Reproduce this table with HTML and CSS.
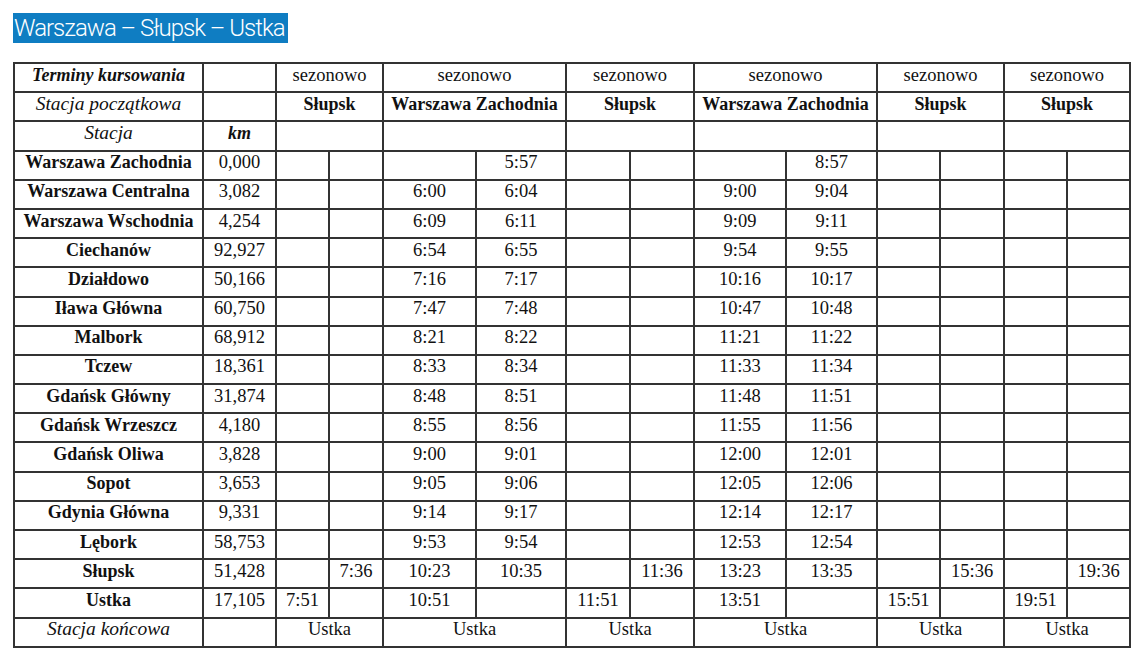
FILE: index.html
```html
<!DOCTYPE html>
<html lang="pl">
<head>
<meta charset="utf-8">
<title>Warszawa – Słupsk – Ustka</title>
<link rel="stylesheet" href="styles.css">
</head>
<body>
<div class="page">
  <h2 class="title"><span class="title-mark">Warszawa – Słupsk – Ustka</span></h2>
  <table class="timetable">
    <colgroup>
      <col class="c-st"><col class="c-km">
      <col class="c-a1"><col class="c-a2">
      <col class="c-b1"><col class="c-b2">
      <col class="c-c1"><col class="c-c2">
      <col class="c-d1"><col class="c-d2">
      <col class="c-e1"><col class="c-e2">
      <col class="c-f1"><col class="c-f2">
    </colgroup>
    <tbody>
      <tr>
        <td class="lbl bi">Terminy kursowania</td><td></td>
        <td colspan="2">sezonowo</td><td colspan="2">sezonowo</td><td colspan="2">sezonowo</td>
        <td colspan="2">sezonowo</td><td colspan="2">sezonowo</td><td colspan="2">sezonowo</td>
      </tr>
      <tr>
        <td class="lbl it">Stacja początkowa</td><td></td>
        <td colspan="2" class="b">Słupsk</td><td colspan="2" class="b">Warszawa Zachodnia</td><td colspan="2" class="b">Słupsk</td>
        <td colspan="2" class="b">Warszawa Zachodnia</td><td colspan="2" class="b">Słupsk</td><td colspan="2" class="b">Słupsk</td>
      </tr>
      <tr>
        <td class="lbl it">Stacja</td><td class="bi">km</td>
        <td colspan="2"></td><td colspan="2"></td><td colspan="2"></td>
        <td colspan="2"></td><td colspan="2"></td><td colspan="2"></td>
      </tr>
      <tr><td class="st">Warszawa Zachodnia</td><td>0,000</td><td></td><td></td><td></td><td>5:57</td><td></td><td></td><td></td><td>8:57</td><td></td><td></td><td></td><td></td></tr>
      <tr><td class="st">Warszawa Centralna</td><td>3,082</td><td></td><td></td><td>6:00</td><td>6:04</td><td></td><td></td><td>9:00</td><td>9:04</td><td></td><td></td><td></td><td></td></tr>
      <tr><td class="st">Warszawa Wschodnia</td><td>4,254</td><td></td><td></td><td>6:09</td><td>6:11</td><td></td><td></td><td>9:09</td><td>9:11</td><td></td><td></td><td></td><td></td></tr>
      <tr><td class="st">Ciechanów</td><td>92,927</td><td></td><td></td><td>6:54</td><td>6:55</td><td></td><td></td><td>9:54</td><td>9:55</td><td></td><td></td><td></td><td></td></tr>
      <tr><td class="st">Działdowo</td><td>50,166</td><td></td><td></td><td>7:16</td><td>7:17</td><td></td><td></td><td>10:16</td><td>10:17</td><td></td><td></td><td></td><td></td></tr>
      <tr><td class="st">Iława Główna</td><td>60,750</td><td></td><td></td><td>7:47</td><td>7:48</td><td></td><td></td><td>10:47</td><td>10:48</td><td></td><td></td><td></td><td></td></tr>
      <tr><td class="st">Malbork</td><td>68,912</td><td></td><td></td><td>8:21</td><td>8:22</td><td></td><td></td><td>11:21</td><td>11:22</td><td></td><td></td><td></td><td></td></tr>
      <tr><td class="st">Tczew</td><td>18,361</td><td></td><td></td><td>8:33</td><td>8:34</td><td></td><td></td><td>11:33</td><td>11:34</td><td></td><td></td><td></td><td></td></tr>
      <tr><td class="st">Gdańsk Główny</td><td>31,874</td><td></td><td></td><td>8:48</td><td>8:51</td><td></td><td></td><td>11:48</td><td>11:51</td><td></td><td></td><td></td><td></td></tr>
      <tr><td class="st">Gdańsk Wrzeszcz</td><td>4,180</td><td></td><td></td><td>8:55</td><td>8:56</td><td></td><td></td><td>11:55</td><td>11:56</td><td></td><td></td><td></td><td></td></tr>
      <tr><td class="st">Gdańsk Oliwa</td><td>3,828</td><td></td><td></td><td>9:00</td><td>9:01</td><td></td><td></td><td>12:00</td><td>12:01</td><td></td><td></td><td></td><td></td></tr>
      <tr><td class="st">Sopot</td><td>3,653</td><td></td><td></td><td>9:05</td><td>9:06</td><td></td><td></td><td>12:05</td><td>12:06</td><td></td><td></td><td></td><td></td></tr>
      <tr><td class="st">Gdynia Główna</td><td>9,331</td><td></td><td></td><td>9:14</td><td>9:17</td><td></td><td></td><td>12:14</td><td>12:17</td><td></td><td></td><td></td><td></td></tr>
      <tr><td class="st">Lębork</td><td>58,753</td><td></td><td></td><td>9:53</td><td>9:54</td><td></td><td></td><td>12:53</td><td>12:54</td><td></td><td></td><td></td><td></td></tr>
      <tr><td class="st">Słupsk</td><td>51,428</td><td></td><td>7:36</td><td>10:23</td><td>10:35</td><td></td><td>11:36</td><td>13:23</td><td>13:35</td><td></td><td>15:36</td><td></td><td>19:36</td></tr>
      <tr><td class="st">Ustka</td><td>17,105</td><td>7:51</td><td></td><td>10:51</td><td></td><td>11:51</td><td></td><td>13:51</td><td></td><td>15:51</td><td></td><td>19:51</td><td></td></tr>
      <tr>
        <td class="lbl it">Stacja końcowa</td><td></td>
        <td colspan="2">Ustka</td><td colspan="2">Ustka</td><td colspan="2">Ustka</td>
        <td colspan="2">Ustka</td><td colspan="2">Ustka</td><td colspan="2">Ustka</td>
      </tr>
    </tbody>
  </table>
</div>
</body>
</html>
```

FILE: styles.css
```css
html, body {
  margin: 0;
  padding: 0;
  background: #ffffff;
}

.page {
  padding: 13px 0 0 13px;
}

.title {
  margin: 0;
  height: 30px;
  font-family: Roboto, "Noto Sans", sans-serif;
  font-weight: 300;
  font-size: 24px;
  line-height: 30px;
  letter-spacing: -1px;
}

.title-mark {
  display: inline-block;
  background: #0f7dc2;
  color: #ffffff;
  padding: 0 3px 0 1px;
  height: 30px;
}

.timetable {
  margin-top: 19px;
  margin-left: 0;
  border-collapse: collapse;
  table-layout: fixed;
  width: 1116px;
  font-family: "Liberation Serif", "Times New Roman", serif;
  font-size: 18.5px;
  color: #111111;
}

.c-st { width: 189px; }
.c-km { width: 73px; }
.c-a1 { width: 53px; }
.c-a2 { width: 54px; }
.c-b1 { width: 93px; }
.c-b2 { width: 90px; }
.c-c1 { width: 64px; }
.c-c2 { width: 64px; }
.c-d1 { width: 92px; }
.c-d2 { width: 91px; }
.c-e1 { width: 63px; }
.c-e2 { width: 64px; }
.c-f1 { width: 63px; }
.c-f2 { width: 63px; }

.timetable tr {
  height: 29.2px;
}

.timetable td {
  border: 2px solid #333333;
  padding: 0 1px 6px;
  text-align: center;
  vertical-align: middle;
  line-height: 20px;
  white-space: nowrap;
  overflow: hidden;
}

.timetable .st {
  font-weight: 700;
  font-size: 18px;
}

.timetable .b {
  font-weight: 700;
  font-size: 18px;
}

.timetable .bi {
  font-weight: 700;
  font-style: italic;
  font-size: 18px;
}

.timetable .it {
  font-style: italic;
  font-size: 19.5px;
}
```
